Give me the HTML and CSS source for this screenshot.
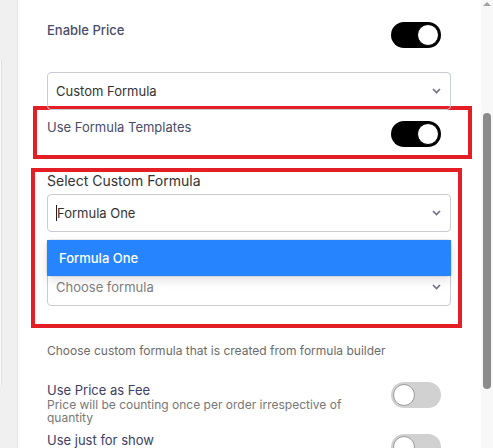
FILE: index.html
```html
<!DOCTYPE html>
<html lang="en">
<head>
  <meta charset="UTF-8" />
  <meta name="viewport" content="width=device-width, initial-scale=1.0"/>
  <title>Price Settings</title>
  <link rel="stylesheet" href="styles.css">
</head>
<body>
  <div class="sidebar">
    <div class="sidebar-card"></div>
  </div>

  <div class="panel">
    <div class="row">
      <div class="label label-strong">Enable Price</div>
      <div class="toggle on"><span class="knob"></span></div>
    </div>

    <div class="select select-first">
      <span class="value">Custom Formula</span>
      <svg class="chevron" width="9" height="6" viewBox="0 0 9 6"><polyline points="1,1 4.5,4.5 8,1" /></svg>
    </div>

    <div class="mark mark-templates">
      <div class="row">
        <div class="label">Use Formula Templates</div>
        <div class="toggle on"><span class="knob"></span></div>
      </div>
    </div>

    <div class="mark mark-formula">
      <div class="field-title">Select Custom Formula</div>
      <div class="select select-open">
        <span class="caret"></span><span class="value">Formula One</span>
        <svg class="chevron" width="9" height="6" viewBox="0 0 9 6"><polyline points="1,1 4.5,4.5 8,1" /></svg>
        <div class="menu">
          <div class="option selected">Formula One</div>
        </div>
      </div>
      <div class="select select-second">
        <span class="value placeholder">Choose formula</span>
        <svg class="chevron" width="9" height="6" viewBox="0 0 9 6"><polyline points="1,1 4.5,4.5 8,1" /></svg>
      </div>
    </div>

    <div class="help">Choose custom formula that is created from formula builder</div>

    <div class="row row-fee">
      <div class="text-col">
        <div class="label label-dark">Use Price as Fee</div>
        <div class="desc">Price will be counting once per order irrespective of quantity</div>
      </div>
      <div class="toggle"><span class="knob"></span></div>
    </div>

    <div class="row row-show">
      <div class="label label-dark">Use just for show</div>
      <div class="toggle"><span class="knob"></span></div>
    </div>
  </div>

  <div class="scrollbar">
    <span class="arrow-up"></span>
    <span class="thumb"></span>
  </div>
</body>
</html>
```

FILE: styles.css
```css
html, body {
  margin: 0;
  padding: 0;
  height: 100%;
  overflow: hidden;
  background: #ffffff;
  font-family: Inter, "Noto Sans", sans-serif;
}

body {
  display: flex;
}

/* left strip of the page behind the panel */
.sidebar {
  width: 17px;
  flex-shrink: 0;
  background: #f0f0f0;
  border-right: 1px solid #e3e3e3;
  display: flex;
  flex-direction: column;
}

.sidebar-card {
  width: 1px;
  height: 325px;
  margin-top: 60px;
  background: #fbfbfb;
  border-right: 1px solid #dedede;
}

.panel {
  flex: 1;
  padding: 20px 30px 0 29px;
  overflow: hidden;
}

.row {
  display: flex;
  justify-content: space-between;
  align-items: flex-start;
}

.label {
  font-size: 13px;
  line-height: 17px;
  color: #4a4c6a;
}

.label-strong {
  font-weight: 500;
  margin-top: 2px;
}

.label-dark {
  color: #3d4064;
  line-height: 16px;
}

.toggle {
  position: relative;
  width: 50px;
  height: 26px;
  margin-top: 2px;
  margin-right: 10px;
  border-radius: 13px;
  background: #d1d1d1;
  flex-shrink: 0;
}

.toggle .knob {
  position: absolute;
  top: 2px;
  left: 2px;
  width: 20px;
  height: 20px;
  border-radius: 50%;
  background: #fff;
  border: 1px solid #9a9a9a;
}

.toggle.on {
  background: #000;
}

.toggle.on .knob {
  left: auto;
  right: 2px;
  border-color: #000;
}

.select {
  position: relative;
  height: 38px;
  box-sizing: border-box;
  border: 1px solid #c9ccd3;
  border-radius: 4px;
  display: flex;
  align-items: center;
  padding: 0 9px 0 8px;
  font-size: 13px;
  color: #333;
}

.select .value {
  flex: 1;
}

.placeholder {
  color: #808080;
}

.chevron {
  fill: none;
  stroke: #6f6f85;
  stroke-width: 1.6;
}

.caret {
  width: 1px;
  height: 16px;
  background: #222;
}

.select-first {
  margin-top: 24px;
}

/* red annotation frames */
.mark {
  border: 4px solid #e31e24;
}

.mark-templates {
  margin: -4px -21px 0 -14px;
  padding: 9px 17px 8px 10px;
}

.mark-formula {
  margin: 9px -11px 0 -16px;
  padding: 0 7px 18px 12px;
}

.field-title {
  font-size: 14px;
  line-height: 18px;
  color: #333;
}

.select-open {
  margin-top: 4px;
}

.menu {
  position: absolute;
  top: 45px;
  left: -1px;
  right: -1px;
  background: #fff;
  border-radius: 4px;
  box-shadow: 0 0 0 1px rgba(0, 0, 0, 0.08), 0 4px 11px rgba(0, 0, 0, 0.12);
  z-index: 2;
}

.option {
  height: 36px;
  line-height: 36px;
  padding: 0 12px;
  font-size: 13px;
}

.option.selected {
  background: #2684ff;
  color: #fff;
  font-weight: 500;
}

.select-second {
  margin-top: 36px;
}

.help {
  margin-top: 15px;
  font-size: 12px;
  line-height: 15px;
  color: #6b6b6b;
}

.row-fee {
  margin-top: 24px;
}

.row-fee .toggle {
  margin-top: 0;
}

.text-col {
  max-width: 310px;
}

.desc {
  font-size: 12px;
  line-height: 13px;
  color: #777;
}

.row-show {
  margin-top: 8px;
}

.scrollbar {
  width: 12px;
  flex-shrink: 0;
  background: #f8f8f8;
  display: flex;
  flex-direction: column;
  align-items: center;
}

.arrow-up {
  margin-top: 2px;
  width: 0;
  height: 0;
  border-left: 4px solid transparent;
  border-right: 4px solid transparent;
  border-bottom: 4px solid #a3a3a3;
}

.thumb {
  margin-top: 107px;
  width: 8px;
  height: 276px;
  border-radius: 4px;
  background: #8b8b8b;
}
```
